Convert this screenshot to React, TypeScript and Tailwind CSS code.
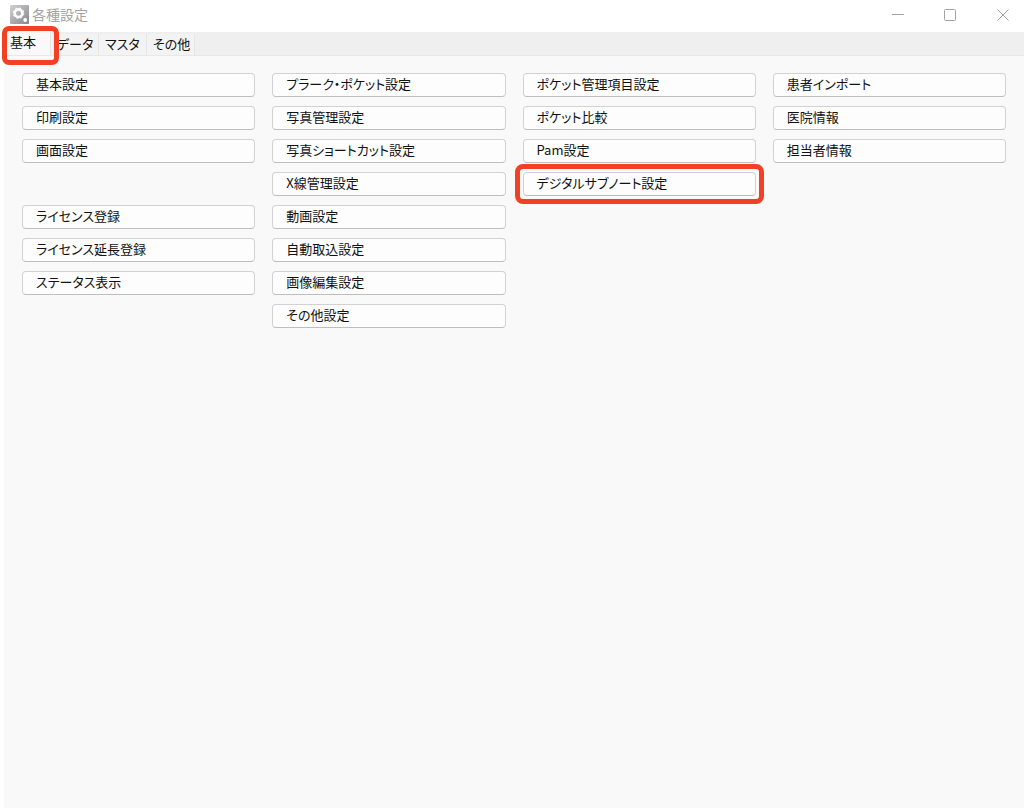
import React, { useState } from 'react';

const TABS = ['基本', 'データ', 'マスタ', 'その他'];

// null keeps an empty row in the column
const COLUMNS: (string | null)[][] = [
  ['基本設定', '印刷設定', '画面設定', null, 'ライセンス登録', 'ライセンス延長登録', 'ステータス表示'],
  [
    'プラーク・ポケット設定',
    '写真管理設定',
    '写真ショートカット設定',
    'X線管理設定',
    '動画設定',
    '自動取込設定',
    '画像編集設定',
    'その他設定',
  ],
  ['ポケット管理項目設定', 'ポケット比較', 'Pam設定', 'デジタルサブノート設定'],
  ['患者インポート', '医院情報', '担当者情報'],
];

const HIGHLIGHTED = 'デジタルサブノート設定';

const AppIcon: React.FC = () => (
  <svg width="19" height="19" viewBox="0 0 19 19" aria-hidden="true">
    <defs>
      <linearGradient id="icon-bg" x1="0" y1="0" x2="1" y2="1">
        <stop offset="0" stopColor="#d2d2d4" />
        <stop offset="1" stopColor="#86868c" />
      </linearGradient>
    </defs>
    <rect width="19" height="19" rx="1" fill="url(#icon-bg)" />
    <circle cx="8.5" cy="8.2" r="3.8" fill="none" stroke="#fff" strokeWidth="2.6" />
    <circle cx="8.5" cy="8.2" r="5.3" fill="none" stroke="#fff" strokeWidth="1" strokeDasharray="2.1 2.06" />
    <circle cx="15.2" cy="15" r="1.9" fill="#fff" />
  </svg>
);

const TitleBar: React.FC = () => (
  <header className="flex h-8 items-center justify-between bg-white pb-[3px] pl-[10px] text-[#a3a3a3]">
    <div className="flex items-center gap-[3px]">
      <AppIcon />
      <h1 className="pb-px text-[14px] leading-4">各種設定</h1>
    </div>
    <div className="flex h-7 items-center">
      <button aria-label="最小化" className="flex h-7 w-[52px] items-center justify-center">
        <svg width="12" height="12" viewBox="0 0 12 12" stroke="currentColor" fill="none">
          <path d="M0 5.5h12" />
        </svg>
      </button>
      <button aria-label="最大化" className="flex h-7 w-[52px] items-center justify-center">
        <svg width="12" height="12" viewBox="0 0 12 12" stroke="currentColor" fill="none">
          <rect x="0.5" y="0.5" width="11" height="11" rx="1" />
        </svg>
      </button>
      <button aria-label="閉じる" className="flex h-7 w-[48px] items-center justify-center pl-[6px]">
        <svg width="12" height="12" viewBox="0 0 12 12" stroke="currentColor" fill="none">
          <path d="M0.5 0.5l11 11M11.5 0.5l-11 11" />
        </svg>
      </button>
    </div>
  </header>
);

const App: React.FC = () => {
  const [activeTab, setActiveTab] = useState('基本');

  return (
    <div className="flex min-h-screen flex-col bg-white font-['Noto_Sans_CJK_JP',sans-serif] text-[13px] text-[#111] [font-feature-settings:'palt']">
      <TitleBar />

      <div role="tablist" className="ml-1 flex h-6 items-end border-b border-[#e8e8e8] bg-[#efefef]">
        {TABS.map((tab) => (
          <button
            key={tab}
            role="tab"
            aria-selected={tab === activeTab}
            onClick={() => setActiveTab(tab)}
            className={`relative border-r border-[#e6e6e6] text-left leading-5 ${
              tab === activeTab ? 'z-10 h-6 w-[47px] bg-[#f9f9f9] pb-[2px] pl-[6px]' : 'h-[21px] w-12 bg-[#f3f3f3] pb-px pl-[6px]'
            }`}
          >
            {tab}
            {tab === '基本' && (
              <span className="pointer-events-none absolute -top-[5px] -left-[2px] h-[39px] w-[57px] rounded-[7px] border-[5px] border-[#f24024]" />
            )}
          </button>
        ))}
      </div>

      <main className="mb-[3px] ml-1 grid flex-1 grid-cols-4 items-start gap-x-[17px] bg-[#f9f9f9] pt-[17px] pr-[18px] pl-[18px]">
        {COLUMNS.map((items, col) => (
          <div key={col} className="flex flex-col gap-[9px]">
            {items.map((item, row) =>
              item ? (
                <button
                  key={item}
                  className="relative h-6 rounded-[4px] border border-[#d2d2d2] border-b-[#bebebe] bg-[#fdfdfd] pb-[2px] pl-[13px] text-left leading-5"
                >
                  {item}
                  {item === HIGHLIGHTED && (
                    <span className="pointer-events-none absolute -inset-x-[9px] -inset-y-[9px] rounded-[8px] border-[5px] border-[#f24024]" />
                  )}
                </button>
              ) : (
                <div key={row} className="h-6" />
              )
            )}
          </div>
        ))}
      </main>
    </div>
  );
};

export default App;
